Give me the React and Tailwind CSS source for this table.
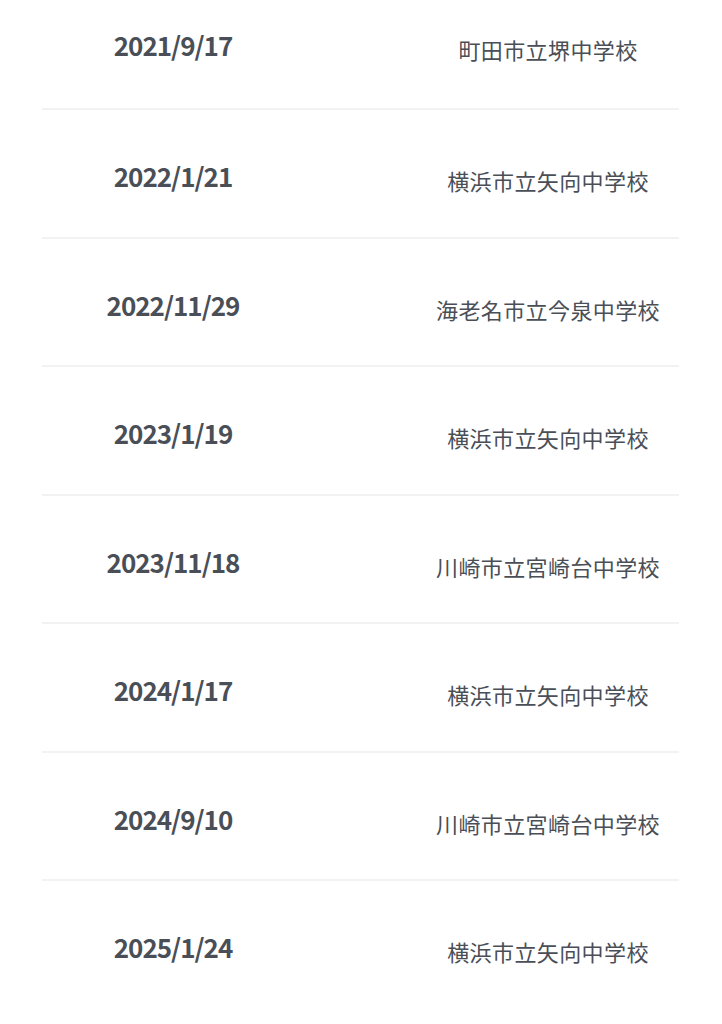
export default function App() {
  const rows = [
    ["2021/9/17", "町田市立堺中学校"],
    ["2022/1/21", "横浜市立矢向中学校"],
    ["2022/11/29", "海老名市立今泉中学校"],
    ["2023/1/19", "横浜市立矢向中学校"],
    ["2023/11/18", "川崎市立宮崎台中学校"],
    ["2024/1/17", "横浜市立矢向中学校"],
    ["2024/9/10", "川崎市立宮崎台中学校"],
    ["2025/1/24", "横浜市立矢向中学校"],
  ];
  return (
    <div
      className="w-[722px] h-[1024px] overflow-hidden bg-white text-[#4a4f57]"
      style={{ fontFamily: '"Noto Sans CJK JP", "Noto Sans", sans-serif' }}
    >
      <div className="mx-[42px] w-[637px]">
        {rows.map(([d, s], i) => {
          const last = i === rows.length - 1;
          const cls =
            i === 0
              ? "h-[110px] pb-[18px] border-b-2"
              : last
              ? "h-[128.5px] pt-[20px] pb-[16px]"
              : "h-[128.5px] pt-[20px] pb-[14px] border-b-2";
          return (
            <div key={i} className={`flex items-center border-[#f2f2f2] ${cls}`}>
              <div className="w-[262px] text-center text-[26px] font-bold leading-none tracking-[-1px]">{d}</div>
              <div className="ml-auto w-[262px] text-center text-[22px] leading-none tracking-[0.4px] pt-[8px]">{s}</div>
            </div>
          );
        })}
      </div>
    </div>
  );
}
